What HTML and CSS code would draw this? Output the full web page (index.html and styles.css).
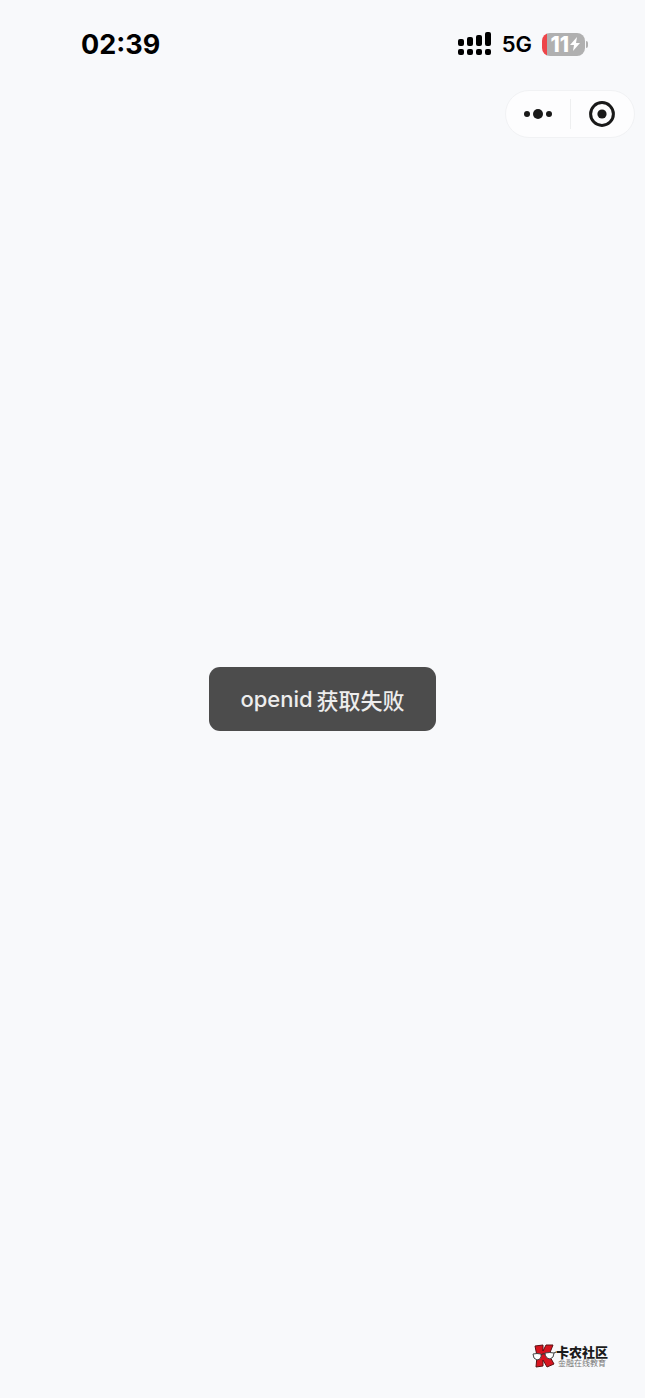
FILE: index.html
```html
<!DOCTYPE html>
<html lang="zh-CN">
  <head>
    <meta charset="UTF-8" />
    <meta name="viewport" content="width=device-width, initial-scale=1.0" />
    <title>卡农社区</title>
    <link rel="stylesheet" href="styles.css">
  </head>
  <body>
    <div class="page">
      <header>
        <div class="status">
          <div class="time">02:39</div>
          <div class="status-right">
            <svg class="signal" width="34" height="24" viewBox="0 0 34 24">
              <rect x="0" y="7" width="6" height="7" rx="2" />
              <rect x="9" y="5" width="6" height="9" rx="2" />
              <rect x="18" y="3" width="6" height="11" rx="2" />
              <rect x="27" y="0" width="6" height="14" rx="2" />
              <rect x="0" y="17" width="6" height="6" rx="2" />
              <rect x="9" y="17" width="6" height="6" rx="2" />
              <rect x="18" y="17" width="6" height="6" rx="2" />
              <rect x="27" y="17" width="6" height="6" rx="2" />
            </svg>
            <div class="network">5G</div>
            <div class="battery">
              <span>11</span>
              <svg width="12" height="16" viewBox="0 0 12 16">
                <path d="M8 1 L1 9 H5 L4 15 L11 7 H7 Z" />
              </svg>
            </div>
          </div>
        </div>
        <div class="capsule">
          <button type="button" aria-label="更多">
            <svg width="30" height="26" viewBox="0 0 30 26">
              <circle cx="4" cy="13" r="3" />
              <circle cx="15" cy="13" r="5" />
              <circle cx="26" cy="13" r="3" />
            </svg>
          </button>
          <button type="button" aria-label="关闭">
            <svg width="26" height="26" viewBox="0 0 26 26">
              <circle class="ring" cx="13" cy="13" r="11.4" />
              <circle cx="13" cy="13" r="4.6" />
            </svg>
          </button>
        </div>
      </header>

      <main>
        <div class="toast" role="alert"><span>openid</span><span>获取失败</span></div>
      </main>

      <footer>
        <svg class="logo" width="24" height="24" viewBox="0 0 24 24">
          <path class="logo-red" d="M3 2 L11 1 L11 7 L14 1 L21 1 L17 11 L22 20 L15 23 L11 16 L11 22 L4 23 L5 12 Z" />
          <path class="lens" d="M1 10 Q5 9 9 10 Q10 15 5 16 Q1 15 1 10 Z" />
          <path class="lens" d="M13 9 Q18 8 22 9 Q22 14 18 15 Q13 14 13 9 Z" />
          <path class="frame" d="M9 11 Q11 9 13 10 M22 9 L24 8" />
        </svg>
        <div class="brand">
          <div class="brand-name">卡农社区</div>
          <div class="brand-sub">金融在线教育</div>
        </div>
      </footer>
    </div>
  </body>
</html>
```

FILE: styles.css
```css
* {
  box-sizing: border-box;
}
body {
  margin: 0;
  background-color: #f8f9fb;
  font-family: Inter, "Noto Sans CJK SC", sans-serif;
}
.page {
  display: grid;
  grid-template-rows: 1fr auto 1fr;
  min-height: 100vh;
}
.status {
  display: flex;
  justify-content: space-between;
  align-items: center;
  height: 48px;
  margin-top: 20px;
  padding: 0 57px 0 81px;
}
.time {
  font-size: 27px;
  font-weight: 700;
  color: #000;
}
.status-right {
  display: flex;
  align-items: center;
}
.network {
  margin: 0 10px;
  font-size: 22px;
  font-weight: 600;
  color: #000;
}
.battery {
  position: relative;
  display: flex;
  align-items: center;
  justify-content: flex-end;
  width: 43px;
  height: 23px;
  margin-right: 3px;
  padding-right: 4px;
  border-radius: 8px;
  background: linear-gradient(to right, #ee4549 5px, #b0b0b0 5px);
  color: #fff;
  font-size: 21px;
  font-weight: 800;
}
.battery::after {
  content: "";
  position: absolute;
  left: 100%;
  width: 2px;
  height: 7px;
  margin-left: 1px;
  border-radius: 0 3px 3px 0;
  background-color: #b0b0b0;
}
.battery svg {
  fill: #fff;
}
.capsule {
  display: flex;
  align-items: center;
  width: 130px;
  height: 48px;
  margin: 22px 10px 0 auto;
  border: 1px solid #f1f2f4;
  border-radius: 24px;
  background-color: #fdfdfe;
}
.capsule button {
  display: flex;
  flex: 1;
  align-items: center;
  justify-content: center;
  height: 30px;
  padding: 0;
  border: none;
  background: none;
}
.capsule button + button {
  border-left: 1px solid #eeeff0;
}
.capsule svg {
  fill: #191919;
}
.capsule .ring {
  fill: none;
  stroke: #191919;
  stroke-width: 3;
}
main {
  display: flex;
  justify-content: center;
}
.toast {
  display: flex;
  align-items: center;
  gap: 4px;
  height: 64px;
  padding: 0 31px;
  border-radius: 11px;
  background-color: #4c4c4c;
  color: #ededed;
  font-size: 22px;
  font-weight: 500;
}
footer {
  display: flex;
  align-items: center;
  align-self: end;
  justify-content: flex-end;
  padding: 0 37px 30px 0;
}
.logo-red {
  fill: #d7141f;
  stroke: #5a1013;
  stroke-width: 1;
}
.lens {
  fill: #fff;
  stroke: #444;
  stroke-width: 1;
}
.frame {
  fill: none;
  stroke: #333;
  stroke-width: 1;
}
.brand-name {
  color: #1c1c1c;
  font-size: 13px;
  font-weight: 900;
  line-height: 14px;
}
.brand-sub {
  padding-left: 2px;
  color: #777;
  font-size: 8px;
  line-height: 9px;
}
```
